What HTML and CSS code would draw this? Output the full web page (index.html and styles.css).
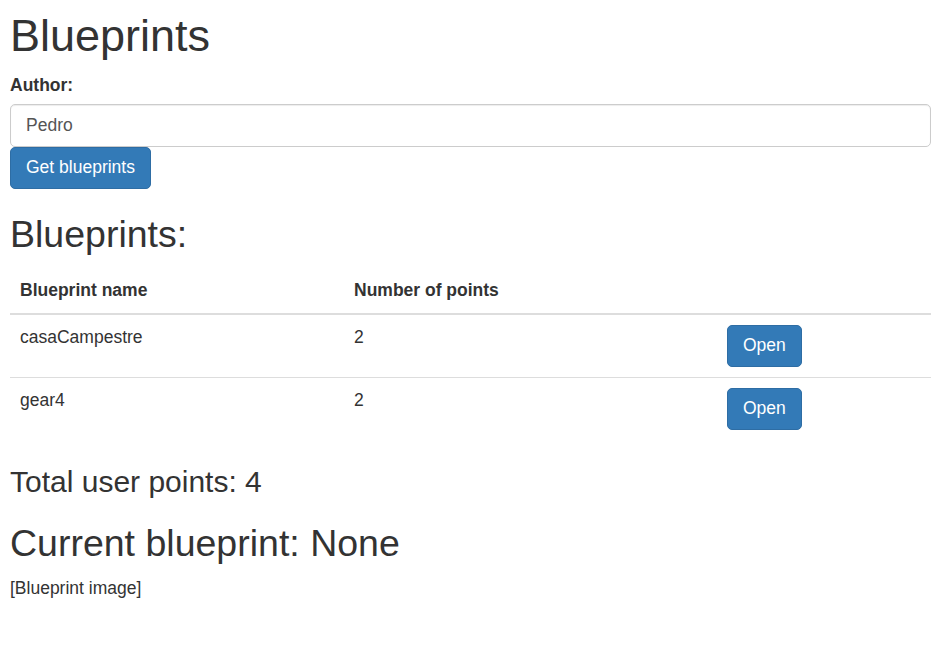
FILE: index.html
```html
<!DOCTYPE html>
<html>
<head>
<meta charset="utf-8">
<title>Blueprints</title>
<link rel="stylesheet" href="styles.css">
</head>
<body>
<div class="page">
  <h1 class="title">Blueprints</h1>
  <label class="field-label" for="author">Author:</label>
  <input class="text-input" id="author" type="text" value="Pedro">
  <button class="btn">Get blueprints</button>

  <h2 class="section-title">Blueprints:</h2>
  <table class="bp-table">
    <thead>
      <tr>
        <th class="col-name">Blueprint name</th>
        <th class="col-points">Number of points</th>
        <th class="col-action"></th>
      </tr>
    </thead>
    <tbody>
      <tr>
        <td>casaCampestre</td>
        <td>2</td>
        <td><button class="btn">Open</button></td>
      </tr>
      <tr>
        <td>gear4</td>
        <td>2</td>
        <td><button class="btn">Open</button></td>
      </tr>
    </tbody>
  </table>

  <h3 class="total">Total user points: 4</h3>
  <h2 class="section-title current">Current blueprint: None</h2>
  <div class="bp-image">[Blueprint image]</div>
</div>
</body>
</html>
```

FILE: styles.css
```css
* {
  box-sizing: border-box;
}

html, body {
  margin: 0;
  padding: 0;
  background: #fff;
}

body {
  font-family: "Liberation Sans", Arial, Helvetica, sans-serif;
  font-size: 17.5px;
  line-height: 25px;
  color: #333;
}

.page {
  padding: 0 16px 0 10px;
  overflow: hidden;
}

.title {
  font-size: 45px;
  font-weight: 500;
  line-height: 49.5px;
  margin: 11px 0 12.5px;
}

.field-label {
  display: inline-block;
  font-weight: bold;
  margin-bottom: 6.25px;
}

.text-input {
  display: block;
  width: 100%;
  height: 42.5px;
  padding: 7.5px 15px;
  font-family: inherit;
  font-size: 17.5px;
  line-height: 25px;
  color: #555;
  background: #fff;
  border: 1px solid #ccc;
  border-radius: 5px;
  box-shadow: inset 0 1px 1px rgba(0, 0, 0, 0.075);
  margin: 0;
}

.btn {
  display: inline-block;
  margin: 0;
  padding: 7.5px 15px;
  font-family: inherit;
  font-size: 17.5px;
  line-height: 25px;
  color: #fff;
  background: #337ab7;
  border: 1px solid #2e6da4;
  border-radius: 5px;
  vertical-align: middle;
  cursor: pointer;
}

.section-title {
  font-size: 37.5px;
  font-weight: 500;
  line-height: 41.25px;
  margin: 25px 0 12.5px;
}

.bp-table {
  width: 100%;
  table-layout: fixed;
  border-collapse: collapse;
  border-spacing: 0;
  margin-bottom: 25px;
}

.bp-table th,
.bp-table td {
  padding: 10px;
  line-height: 25px;
  text-align: left;
  vertical-align: top;
}

.bp-table th {
  font-weight: bold;
  vertical-align: bottom;
  border-bottom: 2.5px solid #ddd;
}

.bp-table td {
  border-top: 1px solid #ddd;
}

.col-name {
  width: 334px;
}

.col-points {
  width: 373px;
}

.total {
  font-size: 30px;
  font-weight: 500;
  line-height: 33px;
  margin: 25px 0 12.5px;
}

.bp-image {
  line-height: 25px;
}
```
